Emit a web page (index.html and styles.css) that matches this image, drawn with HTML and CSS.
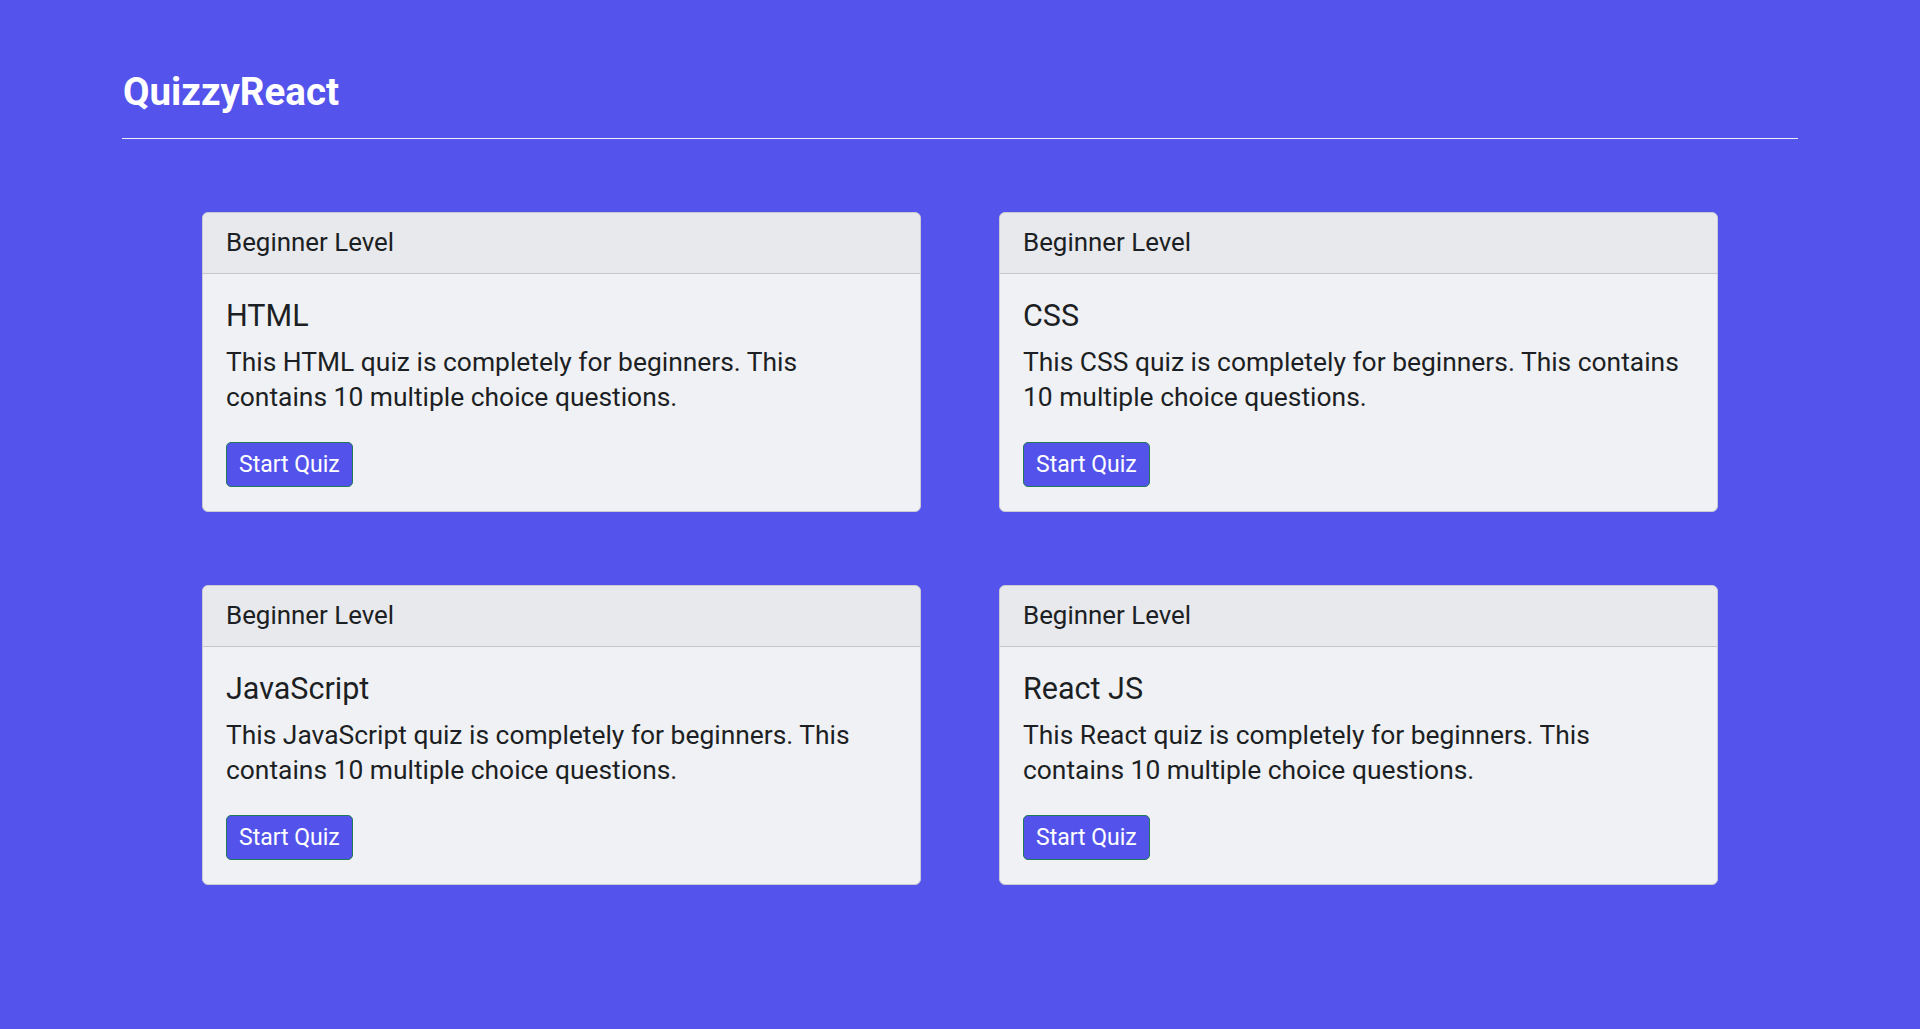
FILE: index.html
```html
<!DOCTYPE html>
<html lang="en">
<head>
<meta charset="utf-8">
<title>QuizzyReact</title>
<link rel="stylesheet" href="styles.css">
</head>
<body>
<header class="topbar">
  <h1 class="brand">QuizzyReact</h1>
</header>
<main class="quiz-grid">
  <section class="card">
    <div class="card-header">Beginner Level</div>
    <div class="card-body">
      <h2 class="card-title">HTML</h2>
      <p class="card-text">This HTML quiz is completely for beginners. This contains 10 multiple choice questions.</p>
      <button class="btn-start">Start Quiz</button>
    </div>
  </section>
  <section class="card">
    <div class="card-header">Beginner Level</div>
    <div class="card-body">
      <h2 class="card-title">CSS</h2>
      <p class="card-text">This CSS quiz is completely for beginners. This contains 10 multiple choice questions.</p>
      <button class="btn-start">Start Quiz</button>
    </div>
  </section>
  <section class="card">
    <div class="card-header">Beginner Level</div>
    <div class="card-body">
      <h2 class="card-title">JavaScript</h2>
      <p class="card-text">This JavaScript quiz is completely for beginners. This contains 10 multiple choice questions.</p>
      <button class="btn-start">Start Quiz</button>
    </div>
  </section>
  <section class="card">
    <div class="card-header">Beginner Level</div>
    <div class="card-body">
      <h2 class="card-title">React JS</h2>
      <p class="card-text">This React quiz is completely for beginners. This contains 10 multiple choice questions.</p>
      <button class="btn-start">Start Quiz</button>
    </div>
  </section>
</main>
</body>
</html>
```

FILE: styles.css
```css
* {
  box-sizing: border-box;
}

html, body {
  margin: 0;
  padding: 0;
}

body {
  background: #5454ec;
  font-family: Roboto, "Noto Sans", sans-serif;
  color: #1c1f23;
  min-height: 1029px;
}

.topbar {
  margin: 0 122px;
  padding-top: 70px;
  padding-bottom: 24px;
  border-bottom: 1px solid rgba(255, 255, 255, 0.9);
}

.brand {
  margin: 0;
  font-size: 38.5px;
  line-height: 44px;
  font-weight: 700;
  color: #ffffff;
  padding-left: 1px;
}

.quiz-grid {
  display: grid;
  grid-template-columns: 719px 719px;
  column-gap: 78px;
  row-gap: 73px;
  justify-content: center;
  padding-top: 73px;
}

.card {
  background: #f0f1f5;
  border: 1px solid #c9cbd2;
  border-radius: 6px;
  overflow: hidden;
}

.card-header {
  background: #e8e9ed;
  border-bottom: 1px solid #c4c6cc;
  padding: 10px 23px 12px;
  font-size: 25.9px;
  line-height: 38px;
}

.card-body {
  padding: 24px 23px 24px;
}

.card-title {
  margin: 0 0 11px;
  font-size: 30.5px;
  line-height: 36px;
  font-weight: 400;
}

.card-text {
  margin: 0 0 27px;
  font-size: 26.4px;
  line-height: 35px;
}

.btn-start {
  display: block;
  height: 45px;
  padding: 0 12px;
  background: #5353ec;
  color: #ffffff;
  border: 1px solid #1f7a55;
  border-radius: 5px;
  font-family: Roboto, "Noto Sans", sans-serif;
  font-size: 23px;
  line-height: 43px;
}
```
